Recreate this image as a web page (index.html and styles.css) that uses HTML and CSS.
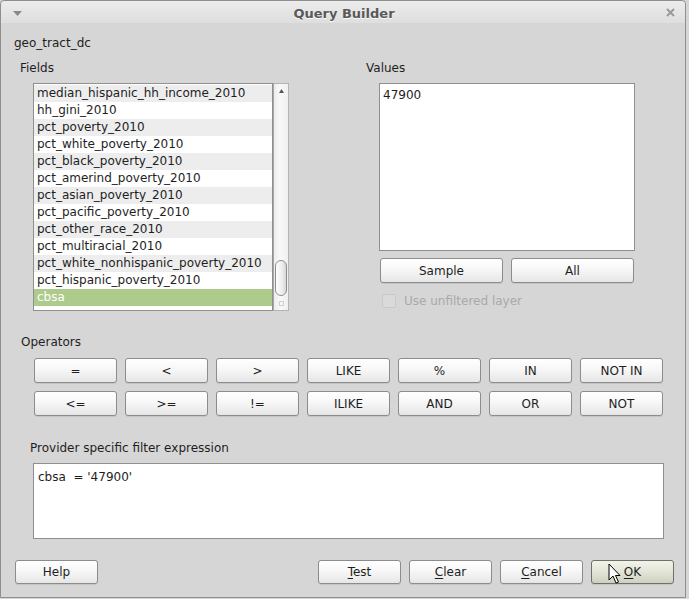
FILE: index.html
```html
<!DOCTYPE html>
<html>
<head>
<meta charset="utf-8">
<link rel="stylesheet" href="styles.css">
</head>
<body>
<div class="window">
  <div class="titlebar">
    <svg class="menu-arrow" width="9" height="5" viewBox="0 0 9 5"><path d="M0 0h9L4.5 5z" fill="#8a8a8a"/></svg>
    <span class="title">Query Builder</span>
    <svg class="close" width="9" height="9" viewBox="0 0 9 9"><path d="M1 1l7 7M8 1L1 8" stroke="#9a9a9a" stroke-width="2"/></svg>
  </div>
  <div class="content">
    <div class="layer-name">geo_tract_dc</div>
    <div class="top-row">
      <section class="fields">
        <div class="group-label">Fields</div>
        <div class="list-frame">
          <ul class="list">
            <li class="alt">median_hispanic_hh_income_2010</li>
            <li>hh_gini_2010</li>
            <li class="alt">pct_poverty_2010</li>
            <li>pct_white_poverty_2010</li>
            <li class="alt">pct_black_poverty_2010</li>
            <li>pct_amerind_poverty_2010</li>
            <li class="alt">pct_asian_poverty_2010</li>
            <li>pct_pacific_poverty_2010</li>
            <li class="alt">pct_other_race_2010</li>
            <li>pct_multiracial_2010</li>
            <li class="alt">pct_white_nonhispanic_poverty_2010</li>
            <li>pct_hispanic_poverty_2010</li>
            <li class="selected">cbsa</li>
          </ul>
          <div class="scrollbar">
            <svg class="sb-up" width="5" height="4" viewBox="0 0 5 4"><path d="M2.5 0L5 4H0z" fill="#555"/></svg>
            <div class="sb-track"><div class="sb-thumb"></div></div>
            <div class="sb-down"></div>
          </div>
        </div>
      </section>
      <section class="values">
        <div class="group-label">Values</div>
        <div class="values-body">
          <div class="values-box">47900</div>
          <div class="value-buttons">
            <button class="btn">Sample</button>
            <button class="btn">All</button>
          </div>
          <div class="checkrow"><span class="checkbox"></span><span>Use unfiltered layer</span></div>
        </div>
      </section>
    </div>
    <section class="operators">
      <div class="group-label">Operators</div>
      <div class="op-grid">
        <button class="btn">=</button>
        <button class="btn">&lt;</button>
        <button class="btn">&gt;</button>
        <button class="btn">LIKE</button>
        <button class="btn">%</button>
        <button class="btn">IN</button>
        <button class="btn">NOT IN</button>
        <button class="btn">&lt;=</button>
        <button class="btn">&gt;=</button>
        <button class="btn">!=</button>
        <button class="btn">ILIKE</button>
        <button class="btn">AND</button>
        <button class="btn">OR</button>
        <button class="btn">NOT</button>
      </div>
    </section>
    <section class="expression">
      <div class="group-label">Provider specific filter expression</div>
      <div class="expr-box">cbsa&nbsp; = '47900'</div>
    </section>
    <div class="footer">
      <button class="btn">Help</button>
      <div class="footer-right">
        <button class="btn"><u>T</u>est</button>
        <button class="btn"><u>C</u>lear</button>
        <button class="btn"><u>C</u>ancel</button>
        <button class="btn hover"><u>O</u>K
          <svg class="cursor" width="13" height="21" viewBox="0 0 13 21"><path d="M1 1v16l4-4 3 7 2.5-1-3-6.5H12z" fill="#fff" stroke="#000" stroke-width="1" stroke-linejoin="round"/></svg>
        </button>
      </div>
    </div>
  </div>
</div>
</body>
</html>
```
FILE: styles.css
```css
* { box-sizing: border-box; }
html, body { margin: 0; padding: 0; }
body {
  background: #d6d6d6;
  font-family: "DejaVu Sans", sans-serif;
  font-size: 12px;
  color: #1e1e1e;
  width: 689px;
  height: 599px;
  overflow: hidden;
}
.window {
  width: 686px;
  height: 598px;
  border: 1px solid #8e8e8e;
  border-radius: 4px 4px 0 0;
  background: #d6d6d6;
  display: flex;
  flex-direction: column;
}
.titlebar {
  height: 22px;
  background: linear-gradient(#ececec, #dedede);
  display: flex;
  align-items: center;
  position: relative;
  border-radius: 4px 4px 0 0;
}
.menu-arrow { margin-left: 12px; margin-top: 2px; }
.title {
  flex: 1;
  text-align: center;
  font-weight: bold;
  font-size: 13px;
  color: #595959;
  text-shadow: 0 1px 0 #fafafa;
  margin-top: 3px;
}
.close { margin-right: 10px; margin-top: 0px; }
.content { display: flex; flex-direction: column; }
.layer-name {
  line-height: 16px;
  padding: 12px 0 0 13px;
}
.group-label { line-height: 16px; padding-top: 1px; }
.top-row {
  display: grid;
  grid-template-columns: 346px 1fr;
  margin-top: 8px;
  padding-left: 19px;
}
.list-frame {
  margin: 7px 0 0 13px;
  display: flex;
  width: 256px;
  height: 228px;
}
.list {
  list-style: none;
  margin: 0;
  padding: 1px 0 0;
  width: 240px;
  border: 1px solid #8f8f8f;
  background: #fff;
  overflow: hidden;
}
.list li {
  height: 17px;
  line-height: 17px;
  padding-left: 3px;
  white-space: nowrap;
}
.list li.alt { background: #ededed; }
.list li.selected { background: #adcb8b; color: #fff; }
.scrollbar {
  width: 16px;
  border: 1px solid #b4b4b4;
  border-left-color: #a8a8a8;
  background: linear-gradient(90deg, #ececec, #f8f8f8 40%, #f0f0f0);
  display: flex;
  flex-direction: column;
  align-items: center;
}
.sb-up { margin-top: 5px; }
.sb-track {
  flex: 1;
  width: 100%;
  display: flex;
  flex-direction: column;
  justify-content: flex-end;
  align-items: center;
}
.sb-thumb {
  width: 12px;
  height: 36px;
  border: 1px solid #8e8e8e;
  border-radius: 6px;
  background: linear-gradient(90deg, #fdfdfd, #eeeeee 60%, #d6d6d6);
}
.sb-down {
  width: 5px;
  height: 5px;
  border: 1px solid #d0d0d0;
  margin: 5px 0 4px;
}
.values-body {
  margin: 7px 0 0 13px;
  width: 256px;
}
.values-box {
  height: 168px;
  border: 1px solid #8f8f8f;
  background: #fff;
  padding: 3px 3px;
  line-height: 16px;
}
.value-buttons {
  display: flex;
  gap: 8px;
  padding: 0 1px;
  margin-top: 7px;
}
.value-buttons .btn { flex: 1; height: 25px; }
.btn {
  font-family: "DejaVu Sans", sans-serif;
  font-size: 12px;
  color: #1e1e1e;
  border: 1px solid #8c8c8c;
  border-radius: 3px;
  background: linear-gradient(#ffffff, #f7f7f7 45%, #e6e6e6);
  box-shadow: 0 1px 0 rgba(0,0,0,0.08);
  padding: 0;
  margin: 0;
  width: 83px;
  height: 25px;
  line-height: 20px;
  text-align: center;
  position: relative;
}
.btn u { text-decoration: underline; text-underline-offset: 2px; }
.checkrow {
  display: flex;
  align-items: center;
  margin: 11px 0 0 3px;
  color: #a9a9a9;
}
.checkbox {
  width: 14px;
  height: 14px;
  border: 1px solid #c9c9c9;
  border-radius: 2px;
  background: #dadada;
  margin-right: 8px;
}
.operators {
  margin-top: 22px;
  padding-left: 20px;
}
.op-grid {
  display: grid;
  grid-template-columns: repeat(7, 83px);
  column-gap: 8px;
  row-gap: 8px;
  margin: 8px 0 0 13px;
}
.expression {
  margin-top: 23px;
  padding-left: 29px;
}
.expr-box {
  margin: 7px 0 0 3px;
  width: 631px;
  height: 76px;
  border: 1px solid #8f8f8f;
  background: #fff;
  padding: 5px 4px;
  line-height: 16px;
}
.footer {
  display: flex;
  justify-content: space-between;
  margin-top: 21px;
  padding: 0 11px 0 14px;
}
.footer .btn { height: 24px; }
.footer-right { display: flex; gap: 8px; }
.btn.hover {
  background: linear-gradient(#f2f3ec, #e2e5d6 50%, #cdd1bf);
  border-color: #6f7168;
}
.cursor {
  position: absolute;
  left: 16px;
  top: 2px;
}
```
